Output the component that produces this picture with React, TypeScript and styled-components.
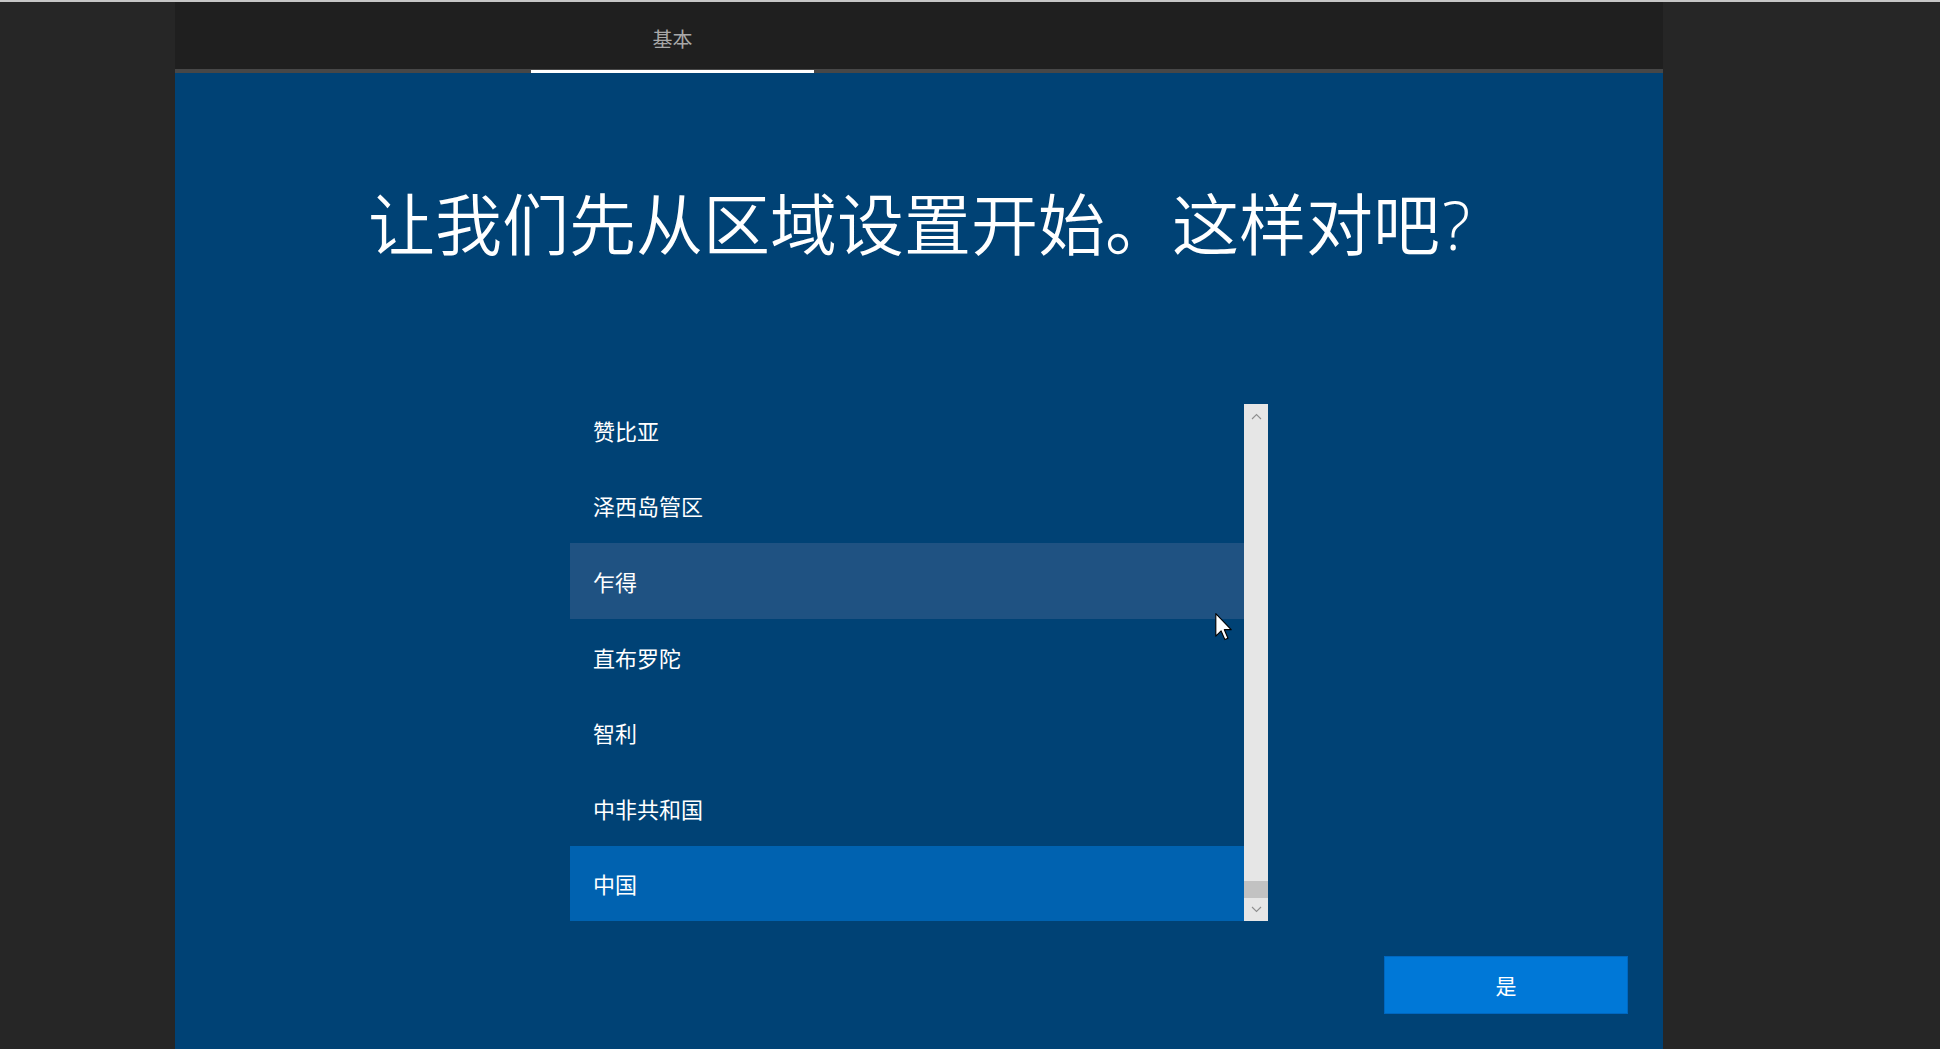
import React from "react";
import styled, { createGlobalStyle } from "styled-components";

const GlobalStyle = createGlobalStyle`
  html, body {
    margin: 0;
    padding: 0;
    background: #262626;
    overflow: hidden;
  }
  body {
    font-family: "Noto Sans CJK SC", "Noto Sans", sans-serif;
  }
`;

const Screen = styled.div`
  width: 1940px;
  height: 1049px;
  display: flex;
  flex-direction: column;
  background: #262626;
`;

const TopEdge = styled.div`
  height: 2px;
  flex: none;
  background: #c6c6c6;
`;

const Stage = styled.div`
  flex: 1;
  display: flex;
  min-height: 0;
`;

const Gutter = styled.div<{ $w: number }>`
  width: ${(p) => p.$w}px;
  flex: none;
  background: #262626;
`;

const Panel = styled.div`
  width: 1488px;
  flex: none;
  display: flex;
  flex-direction: column;
  background: #004275;
  position: relative;
  overflow: hidden;
`;

const Header = styled.div`
  height: 71px;
  flex: none;
  box-sizing: border-box;
  background: #1f1f1f;
  border-bottom: 4px solid #474747;
  display: flex;
  padding-left: 356px;
`;

const Tab = styled.div<{ $active?: boolean }>`
  width: 283px;
  margin-bottom: -4px;
  padding-top: 2px;
  display: flex;
  align-items: center;
  justify-content: center;
  color: #a8a8a8;
  font-size: 20px;
  box-shadow: ${(p) => (p.$active ? "inset 0 -3px 0 #ffffff" : "none")};
`;

const Content = styled.div`
  flex: 1;
  display: flex;
  flex-direction: column;
  align-items: center;
`;

const Title = styled.h1`
  margin: 108px 0 0;
  height: 80px;
  font-family: "Noto Sans CJK SC", sans-serif;
  font-weight: 350;
  font-size: 67px;
  line-height: 80px;
  color: #ffffff;
  white-space: nowrap;
  letter-spacing: 0;
`;

const Question = styled.span`
  font-family: "Open Sans", "Noto Sans", sans-serif;
  font-weight: 300;
  line-height: 1;
  margin-left: 2px;
`;

const ListBox = styled.div`
  margin-top: 143px;
  width: 698px;
  height: 517px;
  flex: none;
  display: flex;
`;

const Viewport = styled.div`
  flex: 1;
  overflow: hidden;
`;

const Rows = styled.div`
  margin-top: -12px;
  display: flex;
  flex-direction: column;
`;

const Row = styled.div<{ $state?: "hover" | "selected" }>`
  height: 75.6px;
  flex: none;
  display: flex;
  align-items: center;
  padding-left: 23px;
  box-sizing: border-box;
  font-size: 22px;
  color: #ffffff;
  background: ${(p) =>
    p.$state === "selected"
      ? "#0062b0"
      : p.$state === "hover"
      ? "#1f5282"
      : "transparent"};
`;

const ScrollBar = styled.div`
  width: 24px;
  flex: none;
  background: #e6e6e6;
  display: flex;
  flex-direction: column;
`;

const ArrowButton = styled.div<{ $h: number }>`
  height: ${(p) => p.$h}px;
  flex: none;
  display: flex;
  align-items: center;
  justify-content: center;
`;

const Track = styled.div`
  flex: 1;
  display: flex;
  flex-direction: column;
  justify-content: flex-end;
`;

const Thumb = styled.div`
  height: 17px;
  background: #c2c2c2;
`;

const Footer = styled.div`
  align-self: stretch;
  margin-top: 35px;
  display: flex;
  justify-content: flex-end;
  padding-right: 35px;
`;

const PrimaryButton = styled.button`
  width: 244px;
  height: 58px;
  box-sizing: border-box;
  background: #0078d7;
  border: 1px solid #0067c0;
  color: #ffffff;
  font-family: "Noto Sans CJK SC", sans-serif;
  font-size: 21px;
  padding: 0;
  cursor: default;
`;

const Pointer = styled.svg`
  position: absolute;
  left: 1040px;
  top: 611px;
  width: 17px;
  height: 28px;
`;

const Chevron = ({ up }: { up?: boolean }) => (
  <svg width="11" height="7" viewBox="0 0 11 7">
    <path
      d={up ? "M1 6 L5.5 1.5 L10 6" : "M1 1 L5.5 5.5 L10 1"}
      fill="none"
      stroke="#8f8f8f"
      strokeWidth="1.1"
    />
  </svg>
);

const regions: { name: string; state?: "hover" | "selected" }[] = [
  { name: "赞比亚" },
  { name: "泽西岛管区" },
  { name: "乍得", state: "hover" },
  { name: "直布罗陀" },
  { name: "智利" },
  { name: "中非共和国" },
  { name: "中国", state: "selected" },
];

export default function App() {
  return (
    <>
      <GlobalStyle />
      <Screen>
        <TopEdge />
        <Stage>
          <Gutter $w={175} />
          <Panel>
            <Header>
              <Tab $active>基本</Tab>
            </Header>
            <Content>
              <Title>
                让我们先从区域设置开始。这样对吧<Question>?</Question>
              </Title>
              <ListBox>
                <Viewport>
                  <Rows>
                    {regions.map((r) => (
                      <Row key={r.name} $state={r.state}>
                        {r.name}
                      </Row>
                    ))}
                  </Rows>
                </Viewport>
                <ScrollBar>
                  <ArrowButton $h={24}>
                    <Chevron up />
                  </ArrowButton>
                  <Track>
                    <Thumb />
                  </Track>
                  <ArrowButton $h={23}>
                    <Chevron />
                  </ArrowButton>
                </ScrollBar>
              </ListBox>
              <Footer>
                <PrimaryButton>是</PrimaryButton>
              </Footer>
            </Content>
            <Pointer viewBox="0 0 12 20">
              <path
                d="M0.5 0.5 L0.5 16.5 L4.3 12.8 L7 19 L9.2 18 L6.6 11.9 L11.5 11.9 Z"
                fill="#ffffff"
                stroke="#000000"
                strokeWidth="0.8"
                strokeLinejoin="round"
              />
            </Pointer>
          </Panel>
          <Gutter $w={277} />
        </Stage>
      </Screen>
    </>
  );
}
